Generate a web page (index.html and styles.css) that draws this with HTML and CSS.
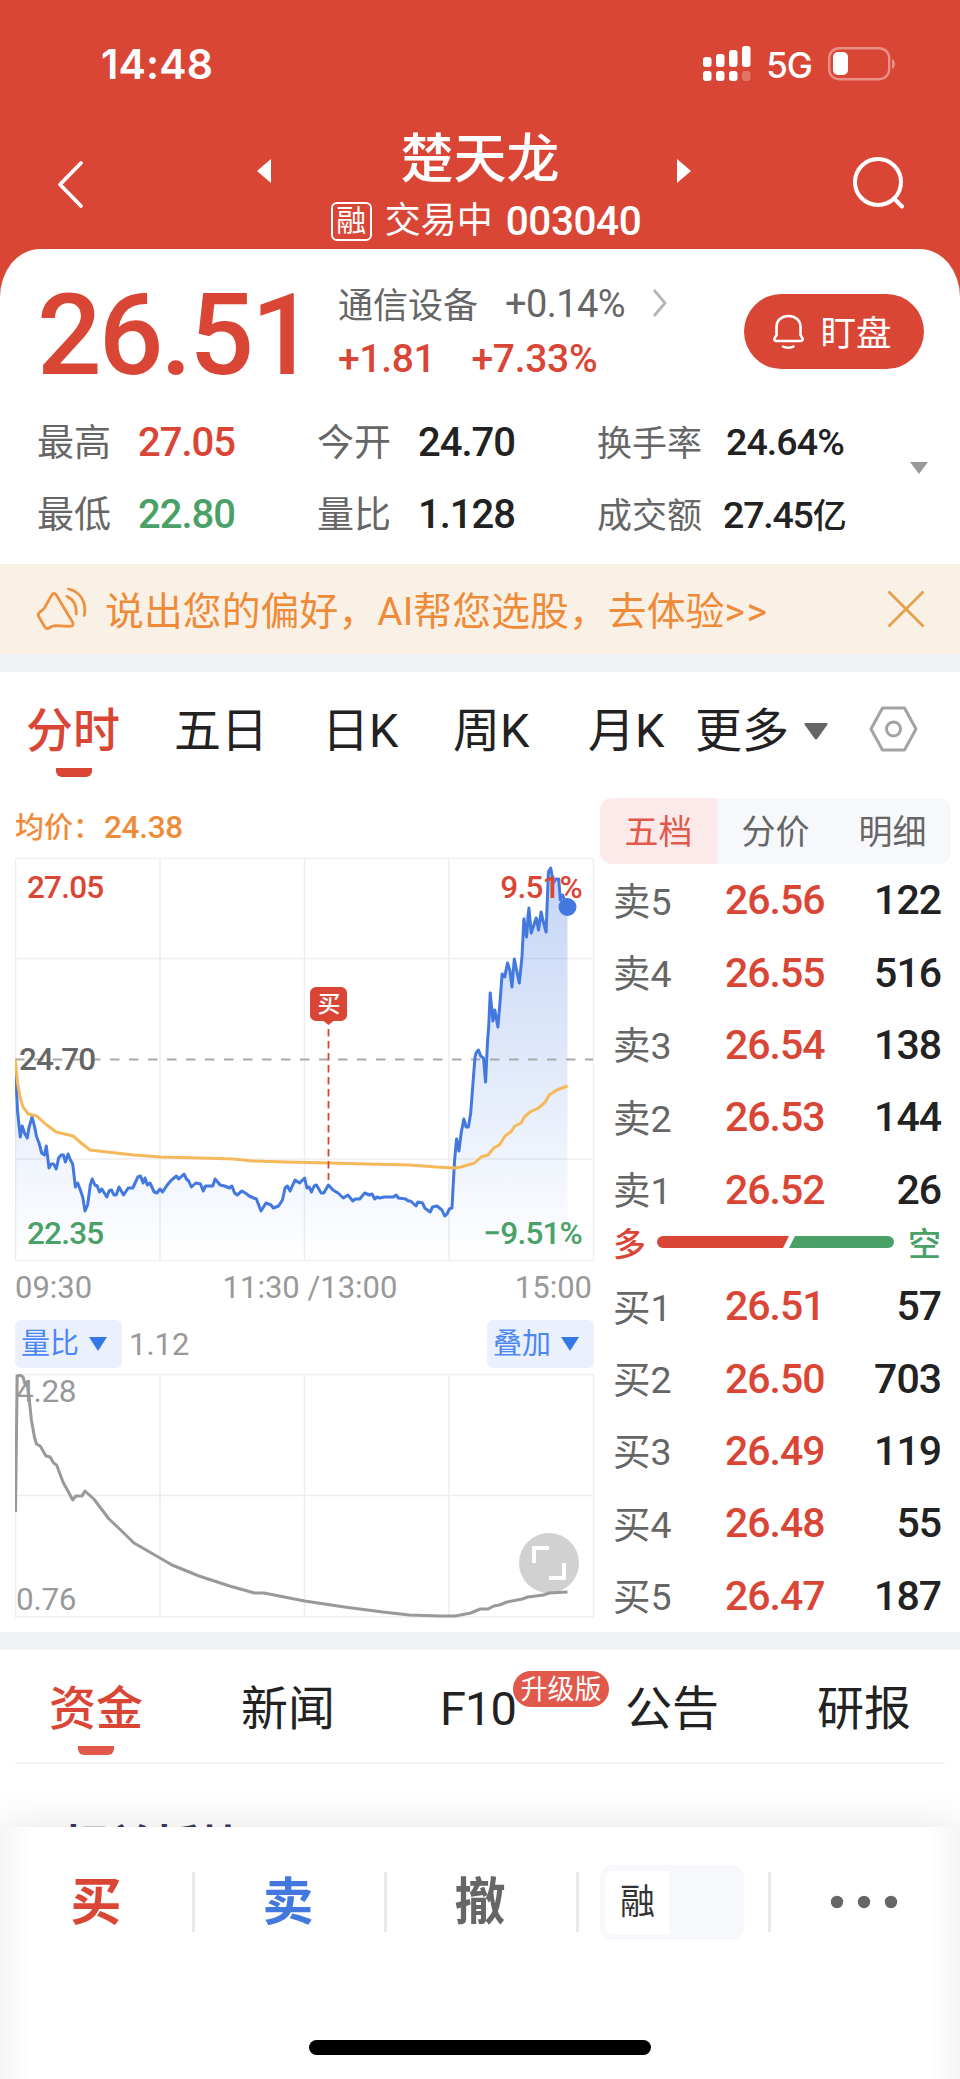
FILE: index.html
```html
<!DOCTYPE html>
<html lang="zh-CN">
<head>
    <meta charset="UTF-8">
    <meta name="viewport" content="width=device-width, initial-scale=1.0">
    <title>楚天龙 003040</title>
    <link rel="stylesheet" href="styles.css">
</head>
<body>
    <header class="header">
        <div class="status-bar">
            <span class="clock">14:48</span>
            <div class="status-icons">
                <svg class="signal" width="48" height="36" viewBox="0 0 48 36" fill="#fff">
                    <rect x="0" y="11" width="8.500" height="10" rx="3"/>
                    <rect x="13" y="8" width="8.500" height="13" rx="3"/>
                    <rect x="26" y="4" width="8.500" height="17" rx="3"/>
                    <rect x="39" y="0" width="8.500" height="21" rx="3"/>
                    <rect x="0" y="25" width="8.500" height="10" rx="3"/>
                    <rect x="13" y="25" width="8.500" height="10" rx="3"/>
                    <rect x="26" y="25" width="8.500" height="10" rx="3"/>
                    <rect x="39" y="25" width="8.500" height="10" rx="3" opacity=".25"/>
                </svg>
                <span class="network">5G</span>
                <svg class="battery" width="68" height="34" viewBox="0 0 68 34">
                    <rect x="1.2" y="1.2" width="60" height="31" rx="10" fill="none" stroke="#fff" stroke-opacity=".4" stroke-width="2.4"/>
                    <rect x="5" y="5" width="15" height="23" rx="5" fill="#fff"/>
                    <path d="M64 12c4 1.500 4 8.500 0 10z" fill="#fff" fill-opacity=".4"/>
                </svg>
            </div>
        </div>
        <div class="title-bar">
            <svg class="back" width="28" height="50" viewBox="0 0 28 50" fill="none" stroke="#fff" stroke-width="3.800" stroke-linecap="round" stroke-linejoin="round"><path d="M25 3L4 24.500 25 46"/></svg>
            <div class="stock">
                <svg class="arrow" width="14" height="24" viewBox="0 0 14 24"><path d="M14 0v24L0 12z" fill="#fff"/></svg>
                <div class="stock-name">
                    <h1>楚天龙</h1>
                    <p><span class="margin-tag">融</span>交易中<b>003040</b></p>
                </div>
                <svg class="arrow" width="14" height="24" viewBox="0 0 14 24"><path d="M0 0v24l14-12z" fill="#fff"/></svg>
            </div>
            <svg class="search" width="54" height="54" viewBox="0 0 54 54" fill="none" stroke="#fff" stroke-width="4" stroke-linecap="round"><circle cx="26" cy="26" r="23"/><path d="M42 42.500l8 8"/></svg>
        </div>
    </header>

    <section class="quote">
        <div class="quote-top">
            <span class="price">26.51</span>
            <div class="change">
                <p class="sector"><span class="sector-name">通信设备</span><span class="sector-change">+0.14%</span>
                    <svg width="16" height="30" viewBox="0 0 16 30" fill="none" stroke="#b5b5b5" stroke-width="2.800"><path d="M2 1l11 13L2 27"/></svg>
                </p>
                <p class="diff"><span>+1.81</span><span>+7.33%</span></p>
            </div>
            <button class="watch">
                <svg width="32" height="36" viewBox="0 0 32 36" fill="none" stroke="#fff" stroke-width="2.600" stroke-linecap="round" stroke-linejoin="round"><path d="M4.500 21V13C4.500 6.500 9.500 2 16.500 2S28.500 6.500 28.500 13v8l1.700 2.800c1 1.700.3 3.200-1.500 3.200H4.300c-1.800 0-2.500-1.500-1.500-3.200z"/><path d="M11 32.500c2.500 1.600 8 1.600 10.500 0"/></svg>
                <span>盯盘</span>
            </button>
        </div>
        <div class="stats">
            <div class="stat"><span>最高</span><b class="up">27.05</b></div>
            <div class="stat"><span>今开</span><b>24.70</b></div>
            <div class="stat small"><span>换手率</span><b>24.64%</b></div>
            <div class="stat"><span>最低</span><b class="down">22.80</b></div>
            <div class="stat"><span>量比</span><b>1.128</b></div>
            <div class="stat small turnover"><span>成交额</span><b>27.45<i class="unit">亿</i></b></div>
            <svg class="expand" width="18" height="12" viewBox="0 0 18 12"><path d="M0 0h18L9 12z" fill="#999"/></svg>
        </div>
    </section>

    <div class="banner">
        <svg class="horn" width="52" height="46" viewBox="0 0 52 46" fill="none" stroke="#ef9140" stroke-width="2.800" stroke-linecap="round" stroke-linejoin="round">
            <path d="M15.800 9c1.200-2 3.300-2 4.500 0L36.500 36c1.300 2.500.3 4.300-2.300 4.300L19 39.700c-1.500 0-2.500.3-4 1.300-3.500 2.300-5 2-6.500-.5L3 31c-1.200-2.200-1-3.500.8-5L7 23.700c1-.8 1.500-1.500 2-2.700z"/>
            <path d="M31 10.500c6.500 2.500 10 9.500 9.200 17.500"/>
            <path d="M32.500 3C44 5.500 51 16 48.300 29.500"/>
        </svg>
        <span class="banner-text">说出您的偏好，AI帮您选股，去体验<span class="go">&gt;&gt;</span></span>
        <svg class="close" width="38" height="38" viewBox="0 0 38 38" stroke="#e6a04c" stroke-width="2.800"><path d="M1.500 1.500l35 35M36.500 1.500l-35 35"/></svg>
    </div>

    <nav class="period-tabs">
        <span class="active">分时</span>
        <span>五日</span>
        <span>日K</span>
        <span>周K</span>
        <span>月K</span>
        <span class="more">更多<svg width="24" height="17" viewBox="0 0 24 17"><path d="M1.500 0h21c1.200 0 1.500.8 1 1.600L13.500 15.500c-.8 1.200-2.200 1.200-3 0L.5 1.600C0 .8.300 0 1.500 0z" fill="#666"/></svg></span>
        <svg class="settings" width="50" height="46" viewBox="0 0 50 46" fill="none" stroke="#a3a3a3" stroke-width="3" stroke-linejoin="round"><path d="M13.500 2h22L47 23 35.500 44h-22L2 23z"/><circle cx="24.500" cy="23" r="7"/></svg>
    </nav>

    <main class="trade">
        <div class="charts">
            <p class="average">均价：<b>24.38</b></p>
            <svg class="chart" width="579" height="403" viewBox="0 0 579 403">
                <defs>
                    <linearGradient id="area" x1="0" y1="0" x2="0" y2="1">
                        <stop offset="0" stop-color="#4379df" stop-opacity=".32"/>
                        <stop offset="1" stop-color="#4379df" stop-opacity="0"/>
                    </linearGradient>
                </defs>
                <path class="grid" d="M.500.500h578v402H.500zM145 0v402M289.500 0v402M434 0v402M0 100.500h578M0 301h578"/>
                <path fill="url(#area)" d="M0 402V207L2.600 254 5.300 279 7.200 268 12.200 280 17.100 259 21.700 279 26.700 295 31.300 288 34 310 41.300 311 46.200 297 57.700 306 60.400 329 65 331 70 353 77.200 321 84.500 334 91.800 339 104 329 108.600 337 125.500 318 139.200 334 145 331 161.400 318 169.100 316 176.400 329 188.200 333 200.100 321 214.600 330 222.300 337 241.400 341 246 353 263.600 348 270.100 330 280 322 289.600 320 296.500 334 308.800 335 313.400 327 328.300 340 337.800 343 349.700 335 362 339 381.100 337 401 348 415.200 354 422 348 429.700 358 437 350 441.600 281 448.800 261 453.400 269 459.900 200 463.400 192 470.600 224 475.200 135 482.900 169 487.100 116 492.500 105 497 129 499.300 101 504.300 125 508.900 61 513.900 50 516.200 75 526.100 54 531.100 74 533.400 14 535.700 10 538.400 25 543.700 21 545.300 42 552.500 49V402z"/>
                <path d="M0 201.500h578" stroke="#a9a9a9" stroke-width="1.800" stroke-dasharray="9.500 9.500"/>
                <polyline class="line blue" points="0.300,207 2.600,254 5.300,279 7.200,268 9.500,275 12.200,280 14.100,269 17.100,259 19.400,268 21.700,279 24,285 26.700,295 29.400,297 31.300,288 34,310 36.300,306 38.600,306 41.300,311 43.600,300 46.200,297 48.500,297 50.400,304 53.100,296 55.400,302 57.700,306 60.400,329 62.700,325 65,331 67.700,339 70,353 72.600,347 75.300,327 77.200,321 79.900,327 82.200,328 84.500,334 86.800,331 91.800,339 94.100,333 96.400,332 99,337 101.300,337 104,329 108.600,337 113.200,330 117.800,330 120.100,325 122.800,319 125.500,318 128.100,325 130,320 132.300,327 135,325 139.200,334 141.900,335 145,331 147.600,334 152.200,327 156.500,322 161.400,318 163.700,321 169.100,316 171.400,321 173.700,323 176.400,329 180.900,325 185.500,326 188.200,333 190.500,328 197.800,328 200.100,321 205.100,327 209.600,328 214.600,330 216.900,328 219.600,335 222.300,337 226.900,333 231.800,336 234.100,338 238.700,340 241.400,341 246,353 251,345 256,347 258.300,350 263.600,348 267.400,342 270.100,330 272.400,328 275.100,333 280,322 284.700,325 289.600,320 291.900,330 294.200,329 296.500,334 299.200,328 301.500,327 306.100,335 308.800,335 313.400,327 318,332 323,335 328.300,340 332.900,337 337.800,343 340.100,341 344.700,341 349.700,335 354.300,337 357,336 359.700,341 362,339 364.600,340 369.200,339 378.400,339 381.100,337 383.400,340 390.700,341 393.300,343 395.600,343 401,348 402.900,344 407.500,345 409.800,350 415.200,354 417.500,349 422,348 427,352 429.700,358 432,356 434.300,351 437,350 438.100,329 439.600,302 441.600,281 443.900,293 446.200,275 448.800,261 451.100,269 453.400,269 455.700,255 458,225 459.900,200 461.100,195 463.400,192 465.700,198 468.400,200 470.600,224 472.600,182 473.700,169 475.200,135 477.900,163 479.800,152 482.900,169 485.200,142 487.100,116 489.800,119 492.500,105 494.800,112 497,129 499.300,101 502,114 504.300,125 507,99 508.900,61 511.600,79 513.900,50 516.200,75 521.200,60 523.500,72 526.100,54 528.400,64 531.100,74 533.400,14 535.700,10 538.400,25 540.700,21 543.700,21 545.300,42 547.600,37 552.500,49"/>
                <polyline class="line orange" points="0,200 2.600,225 5.300,240 8,249 13.300,256 21.700,258 31.700,267 41.300,274 58.100,278 67.300,286 75,292 92,294 119,297 145.700,299 184,300 218.400,301 237.600,303 272,304 314,305 352.400,306 394.500,307 421.300,309 440.400,310 446,309 459.500,305 466,299 473,297 478.700,290 484.400,287 490,278 496.700,273 499.700,268 506.200,265 509.300,259 515,254 523.400,250 530.300,244 534.200,237 541.800,232 552.500,228"/>
                <circle cx="552.500" cy="49" r="9" fill="#4379df"/>
                <path d="M313.500 171v151" stroke="#da4636" stroke-width="1.800" stroke-dasharray="7.500 4.500"/>
                <path d="M301 129h25a6 6 0 0 1 6 6v22a6 6 0 0 1-6 6h-7.500l-5 4-5-4H301a6 6 0 0 1-6-6v-22a6 6 0 0 1 6-6z" fill="#da4636"/>
                <text class="mark" x="313.500" y="154" text-anchor="middle">买</text>
                <text class="up" x="12" y="40">27.05</text>
                <text class="up" x="567" y="40" text-anchor="end">9.51%</text>
                <text class="base" x="4" y="212">24.70</text>
                <text class="down" x="12" y="386">22.35</text>
                <text class="down" x="567" y="386" text-anchor="end">−9.51%</text>
            </svg>
            <div class="axis"><span>09:30</span><span class="noon">11:30 /13:00</span><span>15:00</span></div>
            <div class="indicator">
                <span class="pick">量比<svg width="18" height="14" viewBox="0 0 18 14"><path d="M0 0h18L9 14z" fill="#3478e5"/></svg></span>
                <span class="value">1.12</span>
                <span class="pick">叠加<svg width="18" height="14" viewBox="0 0 18 14"><path d="M0 0h18L9 14z" fill="#3478e5"/></svg></span>
            </div>
            <svg class="chart" width="579" height="244" viewBox="0 0 579 244">
                <path class="grid" d="M.500.500h578v242.500H.500zM145 0v243M289.500 0v243M434 0v243M0 121.500h578"/>
                <circle cx="534" cy="189" r="30" fill="#d1d1d1"/>
                <path d="M519 189v-15h15M549 189v15h-15" fill="none" stroke="#fff" stroke-width="4"/>
                <text class="axis-text" x="1" y="28">4.28</text>
                <text class="axis-text" x="1" y="236">0.76</text>
                <polyline class="line gray" points="0.500,138 2.200,2 5,1 8,3 10.300,11 12.500,12 14,23 16.400,46 19.400,63 21.400,70 25.200,72 31,82 35.100,83 38.600,89 41.600,91 48,108 54,119 57.700,126 60.800,122 67,122 70,117 78.800,125 94,145 103.600,154 119,169 145,184 157,191 184,202 214.600,212 239.500,219 249,219 289.600,227 329.400,233 367.700,238 394.500,241 425,242 440.400,242 455.700,239 465.300,235 473,235 478.700,232 484.400,231 492,228 507.400,225 513,223 528.400,221 534.200,219 552.500,218"/>
            </svg>
        </div>

        <div class="book">
            <div class="book-tabs"><span class="active">五档</span><span>分价</span><span>明细</span></div>
            <div class="level"><span>卖5</span><b>26.56</b><em>122</em></div>
            <div class="level"><span>卖4</span><b>26.55</b><em>516</em></div>
            <div class="level"><span>卖3</span><b>26.54</b><em>138</em></div>
            <div class="level"><span>卖2</span><b>26.53</b><em>144</em></div>
            <div class="level"><span>卖1</span><b>26.52</b><em>26</em></div>
            <div class="ratio">
                <span class="up">多</span>
                <svg width="237" height="12" viewBox="0 0 237 12"><path d="M6 0h126l-6 12H6A6 6 0 0 1 6 0z" fill="#da4636"/><path d="M138 0h93a6 6 0 0 1 0 12h-99z" fill="#4aa168"/></svg>
                <span class="down">空</span>
            </div>
            <div class="level"><span>买1</span><b>26.51</b><em>57</em></div>
            <div class="level"><span>买2</span><b>26.50</b><em>703</em></div>
            <div class="level"><span>买3</span><b>26.49</b><em>119</em></div>
            <div class="level"><span>买4</span><b>26.48</b><em>55</em></div>
            <div class="level"><span>买5</span><b>26.47</b><em>187</em></div>
        </div>
    </main>

    <nav class="info-tabs">
        <span class="active">资金</span>
        <span>新闻</span>
        <span class="f10">F10<i class="badge">升级版</i></span>
        <span>公告</span>
        <span>研报</span>
    </nav>
    <section class="related"><h2>相关板块</h2></section>

    <footer class="footer">
        <div class="actions">
            <span class="buy">买</span>
            <span class="sell">卖</span>
            <span class="cancel">撤</span>
            <span class="switch"><i class="knob">融</i></span>
            <span class="dots"><svg width="68" height="14" viewBox="0 0 68 14" fill="#666"><circle cx="7" cy="7" r="6.200"/><circle cx="34" cy="7" r="6.200"/><circle cx="61" cy="7" r="6.200"/></svg></span>
        </div>
        <div class="home-bar"></div>
    </footer>
</body>
</html>
```
FILE: styles.css
```css
* {
    box-sizing: border-box;
    margin: 0;
    padding: 0;
}

body {
    width: 960px;
    height: 2079px;
    overflow: hidden;
    background-color: #fff;
    color: #222;
    font-family: Roboto, "Noto Sans CJK SC", sans-serif;
}

svg {
    display: block;
    flex-shrink: 0;
}

b, em, i {
    font-weight: 500;
    font-style: normal;
}

.up { color: #da4636; fill: #da4636; }
.down { color: #4aa168; fill: #4aa168; }

/* header */
.header {
    height: 300px;
    background-color: #da4636;
    color: #fff;
}

.status-bar {
    display: flex;
    align-items: center;
    justify-content: space-between;
    height: 128px;
    padding: 0 64px 0 101px;
    font-family: Inter, sans-serif;
}

.clock {
    font-size: 41px;
    font-weight: 600;
    letter-spacing: 0.2px;
}

.status-icons {
    display: flex;
    align-items: center;
}

.network {
    margin: 2px 16px 0 15px;
    font-size: 35px;
    font-weight: 500;
    letter-spacing: -1px;
}

.title-bar {
    display: flex;
    justify-content: space-between;
    align-items: flex-start;
    padding: 0 54px 0 56px;
}

.back {
    margin-top: 32px;
}

.search {
    margin-top: 28px;
}

.stock {
    display: flex;
    justify-content: space-between;
    width: 434px;
    margin-left: 12px;
}

.arrow {
    margin-top: 31px;
}

.stock-name {
    margin-left: 12px;
    text-align: center;
}

.stock-name h1 {
    font-size: 53px;
    font-weight: 500;
    line-height: 65px;
}

.stock-name p {
    display: flex;
    align-items: center;
    height: 56px;
    margin: 0 -6px 0 6px;
    font-size: 36px;
    line-height: 56px;
}

.stock-name b {
    margin-left: 13px;
    font-size: 40.5px;
    letter-spacing: -0.4px;
}

.margin-tag {
    width: 41px;
    height: 39px;
    margin-right: 13px;
    border: 2px solid #fff;
    border-radius: 6px;
    font-size: 30px;
    line-height: 34px;
}

/* quote */
.quote {
    position: relative;
    height: 315px;
    margin-top: -51px;
    padding: 8px 36px 0 37px;
    border-radius: 40px 40px 0 0 / 48px 48px 0 0;
    background-color: #fff;
}

.quote-top {
    display: flex;
    align-items: center;
    height: 149px;
}

.price {
    width: 301px;
    padding-top: 6px;
    color: #da4636;
    font-size: 114px;
    font-weight: 500;
    letter-spacing: -3px;
    line-height: 114px;
}

.change p {
    display: flex;
    align-items: center;
    height: 55px;
}

.sector {
    color: #666;
    font-size: 35px;
}

.sector-name {
    padding-bottom: 4px;
}

.sector-change {
    margin: 0 27px 0 27px;
    font-size: 38px;
    letter-spacing: -0.6px;
}

.diff {
    gap: 36px;
    color: #da4636;
    font-size: 39px;
    font-weight: 500;
    letter-spacing: -0.3px;
}

.watch {
    display: flex;
    align-items: center;
    justify-content: center;
    gap: 16px;
    width: 180px;
    height: 75px;
    margin-left: auto;
    padding-right: 4px;
    border: none;
    border-radius: 38px;
    background-color: #da4636;
    color: #fff;
    font-family: inherit;
    font-size: 35.5px;
}

.watch span {
    padding-bottom: 3px;
}

.stats {
    display: grid;
    grid-template-columns: 280px 280px 1fr;
    grid-auto-rows: 72px;
}

.stat {
    display: flex;
    align-items: center;
    gap: 27px;
    font-size: 37px;
}

.stat span {
    padding-bottom: 4px;
    color: #666;
}

.stat b {
    font-size: 40px;
    letter-spacing: -1px;
}

.small {
    gap: 24px;
    font-size: 35px;
}

.small b {
    font-size: 37.5px;
    letter-spacing: -0.9px;
}

.turnover {
    gap: 21px;
}

.turnover b {
    padding-bottom: 2px;
    letter-spacing: -1.2px;
}

.unit {
    font-size: 34px;
}

.expand {
    position: absolute;
    right: 32px;
    top: 213px;
}

/* banner */
.banner {
    display: flex;
    align-items: center;
    height: 90px;
    padding: 0 35px 0 36px;
    background-color: #faf1e6;
    color: #ef8b38;
}

.banner-text {
    margin-left: 17px;
    padding-bottom: 3px;
    font-size: 38.8px;
    letter-spacing: 0.1px;
}

.go {
    letter-spacing: 2px;
}

.close {
    margin-left: auto;
}

.period-tabs {
    display: grid;
    grid-template-columns: 148px 148px 131px 135px 107px 174px 50px;
    height: 134px;
    padding: 0 26px 18px;
    border-top: 18px solid #f0f2f6;
    font-size: 47px;
    line-height: 118px;
}

.period-tabs .active, .info-tabs .active {
    position: relative;
    color: #da4636;
    font-weight: 500;
}

.period-tabs .active::after, .info-tabs .active::after {
    content: "";
    position: absolute;
    left: 30px;
    top: 96px;
    width: 36px;
    height: 9px;
    border-radius: 0 0 6px 6px;
    background-color: #da4636;
}

.more {
    display: flex;
    align-items: center;
    gap: 15px;
}

.settings {
    margin-top: 34px;
}

/* charts and order book */
.trade {
    display: flex;
    height: 844px;
    padding-left: 15px;
}

.average {
    height: 70px;
    color: #ef8b38;
    font-size: 29px;
    font-weight: 500;
    line-height: 79px;
}

.average b {
    margin-left: 2px;
    font-size: 31.5px;
    letter-spacing: -0.3px;
}

.chart {
    font-size: 31.5px;
    font-weight: 500;
    letter-spacing: -0.8px;
}

.grid {
    fill: none;
    stroke: #eee;
    stroke-width: 1.5;
}

.line {
    fill: none;
    stroke-width: 3;
    stroke-linejoin: round;
}

.blue { stroke: #4379df; }
.orange { stroke: #f5b95c; }
.gray { stroke: #999; }

.mark {
    fill: #fff;
    font-size: 23px;
}

.base {
    fill: #666;
}

.axis-text {
    fill: #999;
    font-weight: 400;
    letter-spacing: -0.3px;
}

.axis {
    display: flex;
    justify-content: space-between;
    height: 59px;
    padding-right: 2px;
    color: #999;
    font-size: 31px;
    line-height: 53px;
}

.noon {
    margin-left: 13px;
}

.indicator {
    display: flex;
    align-items: center;
    height: 48px;
    margin-bottom: 6px;
}

.pick {
    display: flex;
    align-items: center;
    gap: 10px;
    width: 107px;
    height: 48px;
    padding-left: 6px;
    border-radius: 6px;
    background-color: #eaf1fd;
    color: #4d87f6;
    font-size: 29px;
    line-height: 48px;
}

.value {
    margin: 0 auto 0 7px;
    color: #999;
    font-size: 31px;
}

.book {
    width: 351px;
    margin: 10px 0 0 6px;
}

.book-tabs {
    display: flex;
    height: 66px;
    border-radius: 12px;
    overflow: hidden;
    background-color: #f7f8fb;
    color: #666;
    font-size: 34px;
    line-height: 68px;
    text-align: center;
}

.book-tabs span {
    flex: 1;
}

.book-tabs .active {
    background-color: #fceaea;
    color: #e1594b;
}

.level {
    display: grid;
    grid-template-columns: 112px 110px 1fr;
    align-items: center;
    height: 72.4px;
    padding: 0 10px 0 13px;
    font-size: 41px;
    letter-spacing: -1px;
}

.level span {
    padding-bottom: 4px;
    color: #666;
    font-size: 37.5px;
    letter-spacing: 0;
}

.level b {
    color: #da4636;
}

.level em {
    text-align: right;
}

.ratio {
    display: flex;
    align-items: center;
    justify-content: space-between;
    height: 44px;
    padding: 0 10px 11px 13px;
    font-size: 33px;
    font-weight: 500;
}

.ratio svg {
    margin-right: 3px;
}

/* info tabs */
.info-tabs {
    display: grid;
    grid-template-columns: repeat(5, 1fr);
    height: 132px;
    border-top: 18px solid #f0f2f6;
    background: linear-gradient(#f3f4f5, #f3f4f5) 15px 100% / 930px 2px no-repeat;
    font-size: 47px;
    line-height: 118px;
    text-align: center;
}

.info-tabs span {
    position: relative;
}

.info-tabs .active::after {
    left: 78px;
    background-color: #e1594b;
}

.info-tabs .f10 {
    padding-right: 4px;
    letter-spacing: -1px;
}

.badge {
    position: absolute;
    left: 129px;
    top: 21px;
    width: 96px;
    height: 36px;
    border-radius: 18px;
    background-color: #e1594b;
    color: #fff;
    font-size: 27px;
    font-weight: 400;
    letter-spacing: 0;
    line-height: 38px;
}

.related {
    height: 63px;
    padding: 56px 62px 0;
    overflow: hidden;
}

.related h2 {
    color: #3c3560;
    font-size: 46px;
    line-height: 55px;
}

/* footer */
.footer {
    position: relative;
    height: 252px;
    background: linear-gradient(90deg, #f6f6f6, #fff 32px, #fff 928px, #f6f6f6);
    box-shadow: 0 0 40px rgba(0, 0, 0, 0.1);
}

.actions {
    display: grid;
    grid-template-columns: repeat(5, 1fr);
    padding-top: 45px;
}

.actions > span {
    display: flex;
    align-items: center;
    justify-content: center;
    height: 60px;
    font-size: 51px;
    font-weight: 700;
    line-height: 63px;
}

.actions > span + span {
    padding-right: 3px;
    border-left: 3px solid #e9e9e9;
}

.buy { color: #da4636; }
.sell { color: #4379df; }
.cancel { color: #666; }

.knob {
    display: flex;
    align-items: center;
    justify-content: center;
    width: 144px;
    height: 75px;
    border: solid #f7f8fb;
    border-width: 6px 75px 6px 6px;
    border-radius: 12px;
    background-color: #fff;
    color: #333;
    font-size: 35px;
    font-weight: 400;
}

.home-bar {
    width: 342px;
    height: 15px;
    margin: 108px auto 0;
    border-radius: 8px;
    background-color: #000;
}
```
